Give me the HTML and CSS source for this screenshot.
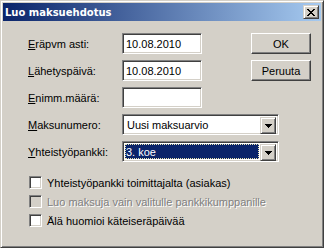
FILE: index.html
```html
<!DOCTYPE html>
<html lang="fi">
<head>
<meta charset="utf-8">
<title>Luo maksuehdotus</title>
<link rel="stylesheet" href="styles.css">
</head>
<body>
<div class="window">
  <div class="titlebar">
    <span class="title">Luo maksuehdotus</span>
    <span class="close raised">
      <svg width="8" height="7" viewBox="0 0 8 7" shape-rendering="crispEdges"><path fill="#000" d="M0 0h2v1h-2z M6 0h2v1h-2z M1 1h2v1h-2z M5 1h2v1h-2z M2 2h4v1h-4z M3 3h2v1h-2z M2 4h4v1h-4z M1 5h2v1h-2z M5 5h2v1h-2z M0 6h2v1h-2z M6 6h2v1h-2z"/></svg>
    </span>
  </div>
  <div class="content">
    <div class="grid">
      <span class="lbl"><u>E</u>räpvm asti:</span>
      <div class="field text">10.08.2010</div>
      <div class="btn">OK</div>

      <span class="lbl"><u>L</u>ähetyspäivä:</span>
      <div class="field text">10.08.2010</div>
      <div class="btn">Peruuta</div>

      <span class="lbl"><u>E</u>nimm.määrä:</span>
      <div class="field text"></div>

      <span class="lbl row4"><u>M</u>aksunumero:</span>
      <div class="field select row4">
        <span class="value">Uusi maksuarvio</span>
        <span class="drop raised"><svg width="7" height="4" viewBox="0 0 7 4" shape-rendering="crispEdges"><path fill="#000" d="M0 0h7v1h-7z M1 1h5v1h-5z M2 2h3v1h-3z M3 3h1v1h-1z"/></svg></span>
      </div>

      <span class="lbl row5"><u>Y</u>hteistyöpankki:</span>
      <div class="field select row5">
        <span class="value hl">3. koe</span>
        <span class="drop raised"><svg width="7" height="4" viewBox="0 0 7 4" shape-rendering="crispEdges"><path fill="#000" d="M0 0h7v1h-7z M1 1h5v1h-5z M2 2h3v1h-3z M3 3h1v1h-1z"/></svg></span>
      </div>
    </div>
    <div class="checks">
      <div class="check"><span class="box"></span><span>Yhteistyöpankki toimittajalta (asiakas)</span></div>
      <div class="check disabled"><span class="box"></span><span>Luo maksuja vain valitulle pankkikumppanille</span></div>
      <div class="check"><span class="box"></span><span>Älä huomioi käteiseräpäivää</span></div>
    </div>
  </div>
</div>
</body>
</html>
```

FILE: styles.css
```css
html, body {
  margin: 0;
  padding: 0;
  background: #d4d0c8;
}

.window {
  width: 324px;
  height: 248px;
  box-sizing: border-box;
  background: #d4d0c8;
  border: 1px solid;
  border-color: #d4d0c8 #404040 #404040 #d4d0c8;
  box-shadow: inset 1px 1px #fff, inset -1px -1px #808080;
  padding: 2px;
  font-family: "Liberation Sans", Arial, sans-serif;
  font-size: 11px;
  color: #000;
}

.titlebar {
  height: 18px;
  display: flex;
  align-items: center;
  justify-content: space-between;
  background: linear-gradient(to right, #0a246a, #a6caf0);
  padding-left: 2px;
  padding-right: 2px;
}

.title {
  font-family: "DejaVu Sans", Verdana, sans-serif;
  font-weight: bold;
  font-size: 10px;
  color: #fff;
}

.raised {
  box-sizing: border-box;
  background: #d4d0c8;
  border: 1px solid;
  border-color: #d4d0c8 #404040 #404040 #d4d0c8;
  box-shadow: inset 1px 1px #fff, inset -1px -1px #808080;
  display: flex;
  align-items: center;
  justify-content: center;
}

.close {
  width: 16px;
  height: 14px;
}

.content {
  padding: 12px 0 0 25px;
}

.grid {
  display: grid;
  grid-template-columns: 94px 129px 60px;
  grid-auto-rows: 21px;
  row-gap: 6px;
}

.lbl {
  grid-column: 1;
  align-self: center;
}

.row4 { grid-row: 4; }
.row5 { grid-row: 5; }

.field {
  box-sizing: border-box;
  background: #fff;
  border: 1px solid;
  border-color: #808080 #fff #fff #808080;
  box-shadow: inset 1px 1px #404040, inset -1px -1px #d4d0c8;
}

.text {
  grid-column: 2;
  width: 80px;
  height: 21px;
  padding: 0 3px;
  display: flex;
  align-items: center;
}

.btn {
  grid-column: 3;
  box-sizing: border-box;
  height: 21px;
  width: 60px;
  border: 1px solid;
  border-color: #fff #404040 #404040 #fff;
  box-shadow: inset -1px -1px #808080;
  display: flex;
  align-items: center;
  justify-content: center;
}

.select {
  grid-column: 2 / 4;
  width: 157px;
  height: 21px;
  padding: 2px;
  display: flex;
}

.value {
  flex: 1;
  display: flex;
  align-items: center;
  padding-left: 2px;
}

.value.hl {
  background: #0a246a;
  color: #fff;
  margin: 0 1px 0 0;
  padding-left: 1px;
  outline: 1px dotted #e8e4b0;
  outline-offset: -1px;
}

.drop {
  width: 16px;
  height: 17px;
}

.checks {
  margin-top: 11px;
  padding-left: 1px;
}

.check {
  height: 19px;
  display: flex;
  align-items: center;
  gap: 5px;
}

.box {
  width: 13px;
  height: 13px;
  box-sizing: border-box;
  background: #fff;
  border: 1px solid;
  border-color: #808080 #fff #fff #808080;
  box-shadow: inset 1px 1px #404040, inset -1px -1px #d4d0c8;
}

.disabled .box {
  background: #d4d0c8;
}

.disabled {
  color: #808080;
  text-shadow: 1px 1px 0 #fff;
}
```
